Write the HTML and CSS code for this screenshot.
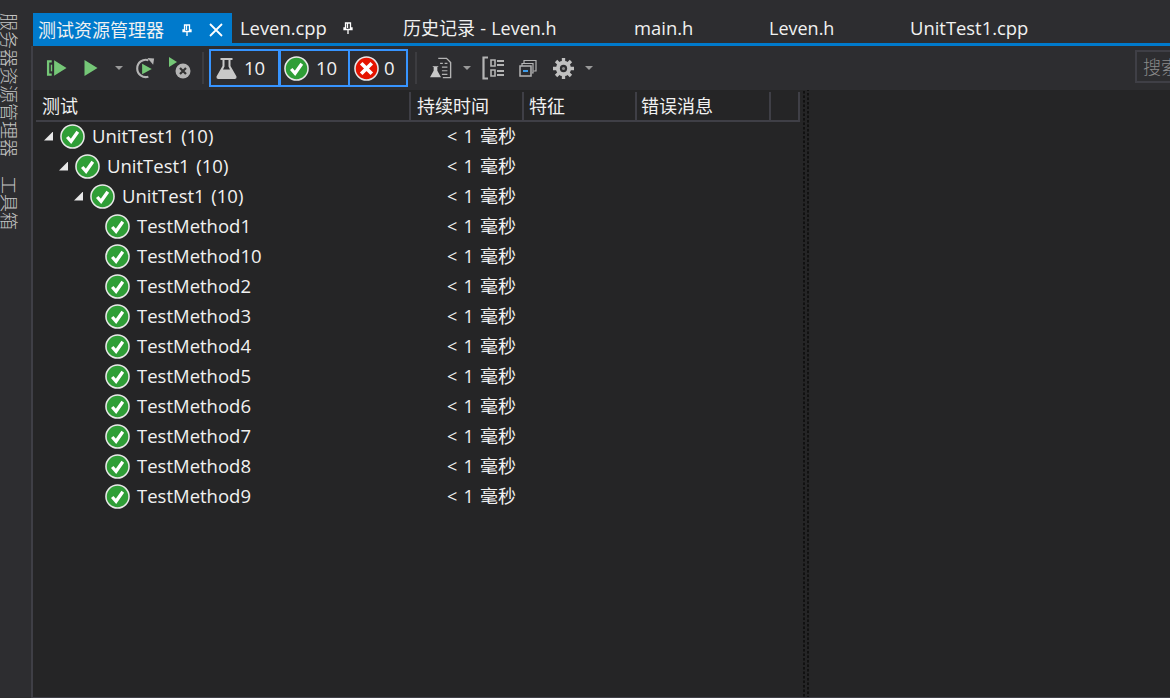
FILE: index.html
```html
<!DOCTYPE html>
<html lang="zh">
<head>
<meta charset="utf-8">
<title>测试资源管理器</title>
<link rel="stylesheet" href="styles.css">
</head>
<body>
<svg class="defs" width="0" height="0">
  <defs>
    <symbol id="ok" viewBox="0 0 26 26">
      <circle cx="13" cy="13" r="12" fill="#2f9e37" stroke="#e8e8e8" stroke-width="1.6"/>
      <path d="M7.500 13.500l4 4.500 7-10" fill="none" stroke="#fff" stroke-width="3.400"/>
    </symbol>
    <symbol id="bad" viewBox="0 0 26 26">
      <circle cx="13" cy="13" r="12" fill="#e51400" stroke="#e8e8e8" stroke-width="1.6"/>
      <path d="M7.500 7.500l11 11M18.500 7.500l-11 11" fill="none" stroke="#fff" stroke-width="3.800"/>
    </symbol>
  </defs>
</svg>
<aside class="side">
  <span class="side-item">服务器资源管理器</span>
  <span class="side-item">工具箱</span>
</aside>
<main class="main">
  <nav class="tabs">
    <div class="tab tab-active">
      <span class="tab-title">测试资源管理器</span>
      <svg class="pin" viewBox="0 0 10 12"><path d="M2.500 1h5v5h1.500v1.500H1V6h1.500zM4.500 1v5M5 7.500V12" fill="none" stroke="#fff" stroke-width="1.300"/></svg>
      <svg class="close" viewBox="0 0 14 14"><path d="M1 1l12 12M13 1L1 13" fill="none" stroke="#fff" stroke-width="1.800"/></svg>
    </div>
    <div class="tab tab-leven">
      <span class="tab-title tab-latin">Leven.cpp</span>
      <svg class="pin" viewBox="0 0 10 12"><path d="M2.500 1h5v5h1.500v1.500H1V6h1.500zM4.500 1v5M5 7.500V12" fill="none" stroke="#fff" stroke-width="1.300"/></svg>
    </div>
    <div class="tab tab-hist"><span class="tab-title tab-mixed">历史记录 - Leven.h</span></div>
    <div class="tab tab-main"><span class="tab-title tab-latin">main.h</span></div>
    <div class="tab tab-lh"><span class="tab-title tab-short">Leven.h</span></div>
    <div class="tab tab-ut"><span class="tab-title tab-latin">UnitTest1.cpp</span></div>
  </nav>
  <div class="toolbar">
    <svg class="ic ic-runall" viewBox="0 0 22 20"><path d="M6 3H2.200v14H6" fill="none" stroke="#75c777" stroke-width="2.400"/><path d="M5 6.500h1.500v7H5z" fill="#75c777"/><path d="M8.500 2l13 8-13 8z" fill="#75c777"/></svg>
    <svg class="ic ic-run" viewBox="0 0 14 18"><path d="M0.500 1l13 8-13 8z" fill="#75c777"/></svg>
    <span class="caret caret-run"></span>
    <svg class="ic ic-rerun" viewBox="0 0 24 24"><path d="M15 3.300A9 9 0 1 0 15 20.500" fill="none" stroke="#b4b4b4" stroke-width="2.200"/><path d="M14 1l7 .5-1 6.500z" fill="#b4b4b4"/><path d="M8.500 7l10 5.500-10 5.500z" fill="#75c777"/></svg>
    <svg class="ic ic-cancel" viewBox="0 0 24 24"><path d="M1 1l8 5-8 5z" fill="#75c777"/><circle cx="15" cy="15" r="7.500" fill="#b4b4b4"/><path d="M12 12l6 6M18 12l-6 6" stroke="#333" stroke-width="2.200"/></svg>
    <span class="sep sep-a"></span>
    <div class="filters">
      <div class="filter filter-all">
        <svg class="flask" viewBox="0 0 20 22"><path d="M4 1h12v2h-2v6l6 10.500q.5 2-1.500 2.500H1.500q-2-.5-1.500-2.500L6 9V3H4z" fill="#c8c8c8"/><path d="M8 3h4v6.500l1.500 3h-7L8 9.500z" fill="#2d2d30"/></svg>
        <span class="count">10</span>
      </div>
      <div class="filter filter-ok">
        <svg class="status-lg"><use href="#ok"/></svg>
        <span class="count">10</span>
      </div>
      <div class="filter filter-bad">
        <svg class="status-lg"><use href="#bad"/></svg>
        <span class="count count-zero">0</span>
      </div>
    </div>
    <span class="sep sep-b"></span>
    <svg class="ic ic-play" viewBox="0 0 24 24"><path d="M9 1.500h9l4.500 4.500v16.500H14" fill="none" stroke="#b4b4b4" stroke-width="1.500"/><path d="M11 7h3M16 7h3M13 11h6M13 15h6M13 19h6" stroke="#b4b4b4" stroke-width="1.300"/><path d="M3 10h6v1H8v4l4 7H0l4-7v-4H3z" fill="#c8c8c8"/></svg>
    <span class="caret caret-play"></span>
    <svg class="ic ic-group" viewBox="0 0 22 24"><path d="M6 1.500H1.500v21H6" fill="none" stroke="#b4b4b4" stroke-width="2.200"/><path d="M9 4h4v6H9zM9 14h4v6H9z" fill="none" stroke="#b4b4b4" stroke-width="1.600"/><path d="M15 5h7M15 9h7M15 15h7M15 19h7" stroke="#b4b4b4" stroke-width="1.800"/></svg>
    <svg class="ic ic-copy" viewBox="0 0 18 18"><path d="M5 4V1.500h12V12h-2.500" fill="none" stroke="#b4b4b4" stroke-width="1.200"/><path d="M3 7V4.500h11V14h-1" fill="none" stroke="#b4b4b4" stroke-width="1.200"/><rect x="1" y="7" width="11" height="10" fill="#2d2d30" stroke="#b4b4b4" stroke-width="1.500"/><path d="M4 12h5" stroke="#3f9ce8" stroke-width="2"/></svg>
    <svg class="ic ic-gear" viewBox="0 0 22 22"><circle cx="11" cy="11" r="6" fill="none" stroke="#c0c0c0" stroke-width="4"/><path d="M11 0v22M0 11h22M3.200 3.200l15.600 15.600M18.800 3.200L3.200 18.800" stroke="#c0c0c0" stroke-width="3.500"/><circle cx="11" cy="11" r="3.800" fill="#2d2d30"/><circle cx="11" cy="11" r="1.600" fill="#8a8a8a"/></svg>
    <span class="caret caret-gear"></span>
    <div class="search">搜索</div>
  </div>
  <div class="pane">
    <div class="grid">
      <div class="head">
        <div class="th th-test">测试</div>
        <div class="th th-dur">持续时间</div>
        <div class="th th-trait">特征</div>
        <div class="th th-err">错误消息</div>
        <div class="th th-end"></div>
      </div>
      <div class="row lv0"><span class="tri"></span><svg class="status"><use href="#ok"/></svg><span class="name name-group">UnitTest1&nbsp; (10)</span><span class="dur">&lt; 1 毫秒</span></div>
      <div class="row lv1"><span class="tri"></span><svg class="status"><use href="#ok"/></svg><span class="name name-group">UnitTest1&nbsp; (10)</span><span class="dur">&lt; 1 毫秒</span></div>
      <div class="row lv2"><span class="tri"></span><svg class="status"><use href="#ok"/></svg><span class="name name-group">UnitTest1&nbsp; (10)</span><span class="dur">&lt; 1 毫秒</span></div>
      <div class="row lv3"><svg class="status"><use href="#ok"/></svg><span class="name">TestMethod1</span><span class="dur">&lt; 1 毫秒</span></div>
      <div class="row lv3"><svg class="status"><use href="#ok"/></svg><span class="name">TestMethod10</span><span class="dur">&lt; 1 毫秒</span></div>
      <div class="row lv3"><svg class="status"><use href="#ok"/></svg><span class="name">TestMethod2</span><span class="dur">&lt; 1 毫秒</span></div>
      <div class="row lv3"><svg class="status"><use href="#ok"/></svg><span class="name">TestMethod3</span><span class="dur">&lt; 1 毫秒</span></div>
      <div class="row lv3"><svg class="status"><use href="#ok"/></svg><span class="name">TestMethod4</span><span class="dur">&lt; 1 毫秒</span></div>
      <div class="row lv3"><svg class="status"><use href="#ok"/></svg><span class="name">TestMethod5</span><span class="dur">&lt; 1 毫秒</span></div>
      <div class="row lv3"><svg class="status"><use href="#ok"/></svg><span class="name">TestMethod6</span><span class="dur">&lt; 1 毫秒</span></div>
      <div class="row lv3"><svg class="status"><use href="#ok"/></svg><span class="name">TestMethod7</span><span class="dur">&lt; 1 毫秒</span></div>
      <div class="row lv3"><svg class="status"><use href="#ok"/></svg><span class="name">TestMethod8</span><span class="dur">&lt; 1 毫秒</span></div>
      <div class="row lv3"><svg class="status"><use href="#ok"/></svg><span class="name">TestMethod9</span><span class="dur">&lt; 1 毫秒</span></div>
    </div>
    <div class="splitter"></div>
    <div class="detail"></div>
  </div>
</main>
</body>
</html>
```
FILE: styles.css
```css
* { box-sizing: border-box; }
html, body { height: 100%; }
body {
  margin: 0;
  display: flex;
  height: 698px;
  overflow: hidden;
  background: #2d2d30;
  color: #f1f1f1;
  font: 18px/24px "Open Sans", "Noto Sans CJK SC", sans-serif;
}
.defs { position: absolute; }
.side {
  width: 31px;
  flex: none;
  padding-top: 13px;
  display: flex;
  flex-direction: column;
  gap: 19px;
}
.side-item {
  writing-mode: vertical-rl;
  text-orientation: sideways;
  width: 20px;
  line-height: 20px;
  font-size: 18px;
  color: #c4c4c4;
  font-family: "Noto Sans CJK SC", sans-serif;
  font-weight: 300;
}
.main {
  flex: 1;
  min-width: 0;
  display: flex;
  flex-direction: column;
}
.tabs {
  height: 46px;
  flex: none;
  margin-left: 2px;
  padding-top: 13px;
  display: flex;
  border-bottom: 3px solid #007acc;
}
.tab {
  height: 33px;
  display: flex;
  align-items: center;
  white-space: nowrap;
  padding-bottom: 3px;
}
.tab-title { font-size: 18px; }
.tab-latin { font-size: 18.400px; }
.tab-short { font-size: 18px; }
.tab-mixed { word-spacing: .5px; }
.tab-active { width: 199px; background: #007acc; padding: 0 0 0 5px; }
.tab-leven { width: 163px; padding-left: 8px; }
.tab-hist { width: 231px; padding-left: 8px; }
.tab-main { width: 135px; padding-left: 8px; }
.tab-lh { width: 141px; padding-left: 8px; }
.tab-ut { padding-left: 8px; }
.pin { width: 10px; height: 12px; flex: none; }
.tab-active .pin { margin-left: 18px; }
.tab-leven .pin { margin-left: 16px; }
.close { width: 14px; height: 14px; margin-left: 17px; flex: none; }
.toolbar {
  height: 44px;
  flex: none;
  display: flex;
  align-items: center;
  position: relative;
  padding-left: 12px;
  border-left: 2px solid #3f3f46;
}
.ic { flex: none; display: block; }
.ic-runall { width: 21px; height: 20px; margin-left: 1px; }
.ic-run { width: 14px; height: 18px; margin-left: 17px; }
.caret {
  flex: none;
  width: 0;
  height: 0;
  border-left: 4.500px solid transparent;
  border-right: 4.500px solid transparent;
  border-top: 4.500px solid #999;
}
.caret-run { margin-left: 17px; }
.ic-rerun { width: 23px; height: 23px; margin-left: 11px; }
.ic-cancel { width: 24px; height: 24px; margin-left: 11px; }
.sep { flex: none; width: 2px; height: 32px; background: #3c3c40; }
.sep-a { margin-left: 10px; }
.filters { display: flex; margin-left: 5px; height: 38px; }
.filter {
  height: 38px;
  display: flex;
  align-items: center;
  border: 2px solid #3794ff;
}
.filter-all { width: 71px; padding-left: 5px; }
.filter-ok { width: 71px; padding-left: 3px; margin-left: -1px; }
.filter-bad { width: 60px; padding-left: 4px; margin-left: -2px; }
.flask { width: 21px; height: 22px; flex: none; }
.status-lg { width: 25px; height: 25px; flex: none; }
.count { font-size: 18.500px; margin-left: 7px; }
.count-zero { margin-left: 5px; }
.sep-b { margin-left: 7px; }
.ic-play { width: 22px; height: 24px; margin-left: 13px; }
.caret-play { margin-left: 11px; }
.ic-group { width: 22px; height: 24px; margin-left: 11px; }
.ic-copy { width: 18px; height: 18px; margin-left: 15px; }
.ic-gear { width: 21px; height: 21px; margin-left: 16px; }
.caret-gear { margin-left: 11px; }
.search {
  position: absolute;
  left: 1102px;
  top: 4px;
  width: 60px;
  height: 33px;
  border: 2px solid #3f3f46;
  color: #8a8a8a;
  padding-left: 6px;
  line-height: 29px;
  white-space: nowrap;
  overflow: hidden;
  font-family: "Noto Sans CJK SC", sans-serif;
  font-weight: 300;
}
.pane {
  flex: 1;
  min-height: 0;
  display: flex;
  background: #252526;
  border-left: 2px solid #3f3f46;
  border-bottom: 1px solid #3f3f46;
}
.grid { width: 767px; flex: none; padding-top: 2px; }
.head {
  height: 30px;
  margin-left: 3px;
  margin-bottom: -1px;
  display: flex;
  border-bottom: 2px solid #3f3f46;
}
.th {
  font-size: 18px;
  line-height: 26px;
  padding-left: 6px;
  border-right: 2px solid #3f3f46;
  font-family: "Noto Sans CJK SC", sans-serif;
  font-weight: 400;
}
.th-test { width: 375px; }
.th-dur { width: 113px; }
.th-trait { width: 113px; padding-left: 5px; }
.th-err { width: 134px; padding-left: 4px; }
.th-end { width: 29px; padding: 0; }
.row {
  height: 30px;
  display: flex;
  align-items: center;
  position: relative;
}
.lv0 { padding-left: 11px; }
.lv1 { padding-left: 26px; }
.lv2 { padding-left: 41px; }
.lv3 { padding-left: 72px; }
.tri {
  flex: none;
  width: 9px;
  height: 9px;
  margin-right: 7px;
  background: #e8e8e8;
  clip-path: polygon(100% 0, 100% 100%, 0 100%);
}
.status { width: 25px; height: 25px; flex: none; }
.name { margin-left: 7px; white-space: nowrap; font-size: 18.500px; }
.name-group { word-spacing: -1.500px; }
.dur {
  position: absolute;
  left: 414px;
  white-space: nowrap;
  font-size: 18px;
  word-spacing: 1.500px;
}
.splitter {
  width: 8px;
  flex: none;
  margin-left: 2px;
  background-image:
    radial-gradient(#111 1px, transparent 1.200px),
    radial-gradient(#111 1px, transparent 1.200px);
  background-size: 4px 4.500px, 4px 4.500px;
  background-position: 0 0, 4px 2px;
  background-repeat: repeat-y;
}
.detail { flex: 1; }
```
